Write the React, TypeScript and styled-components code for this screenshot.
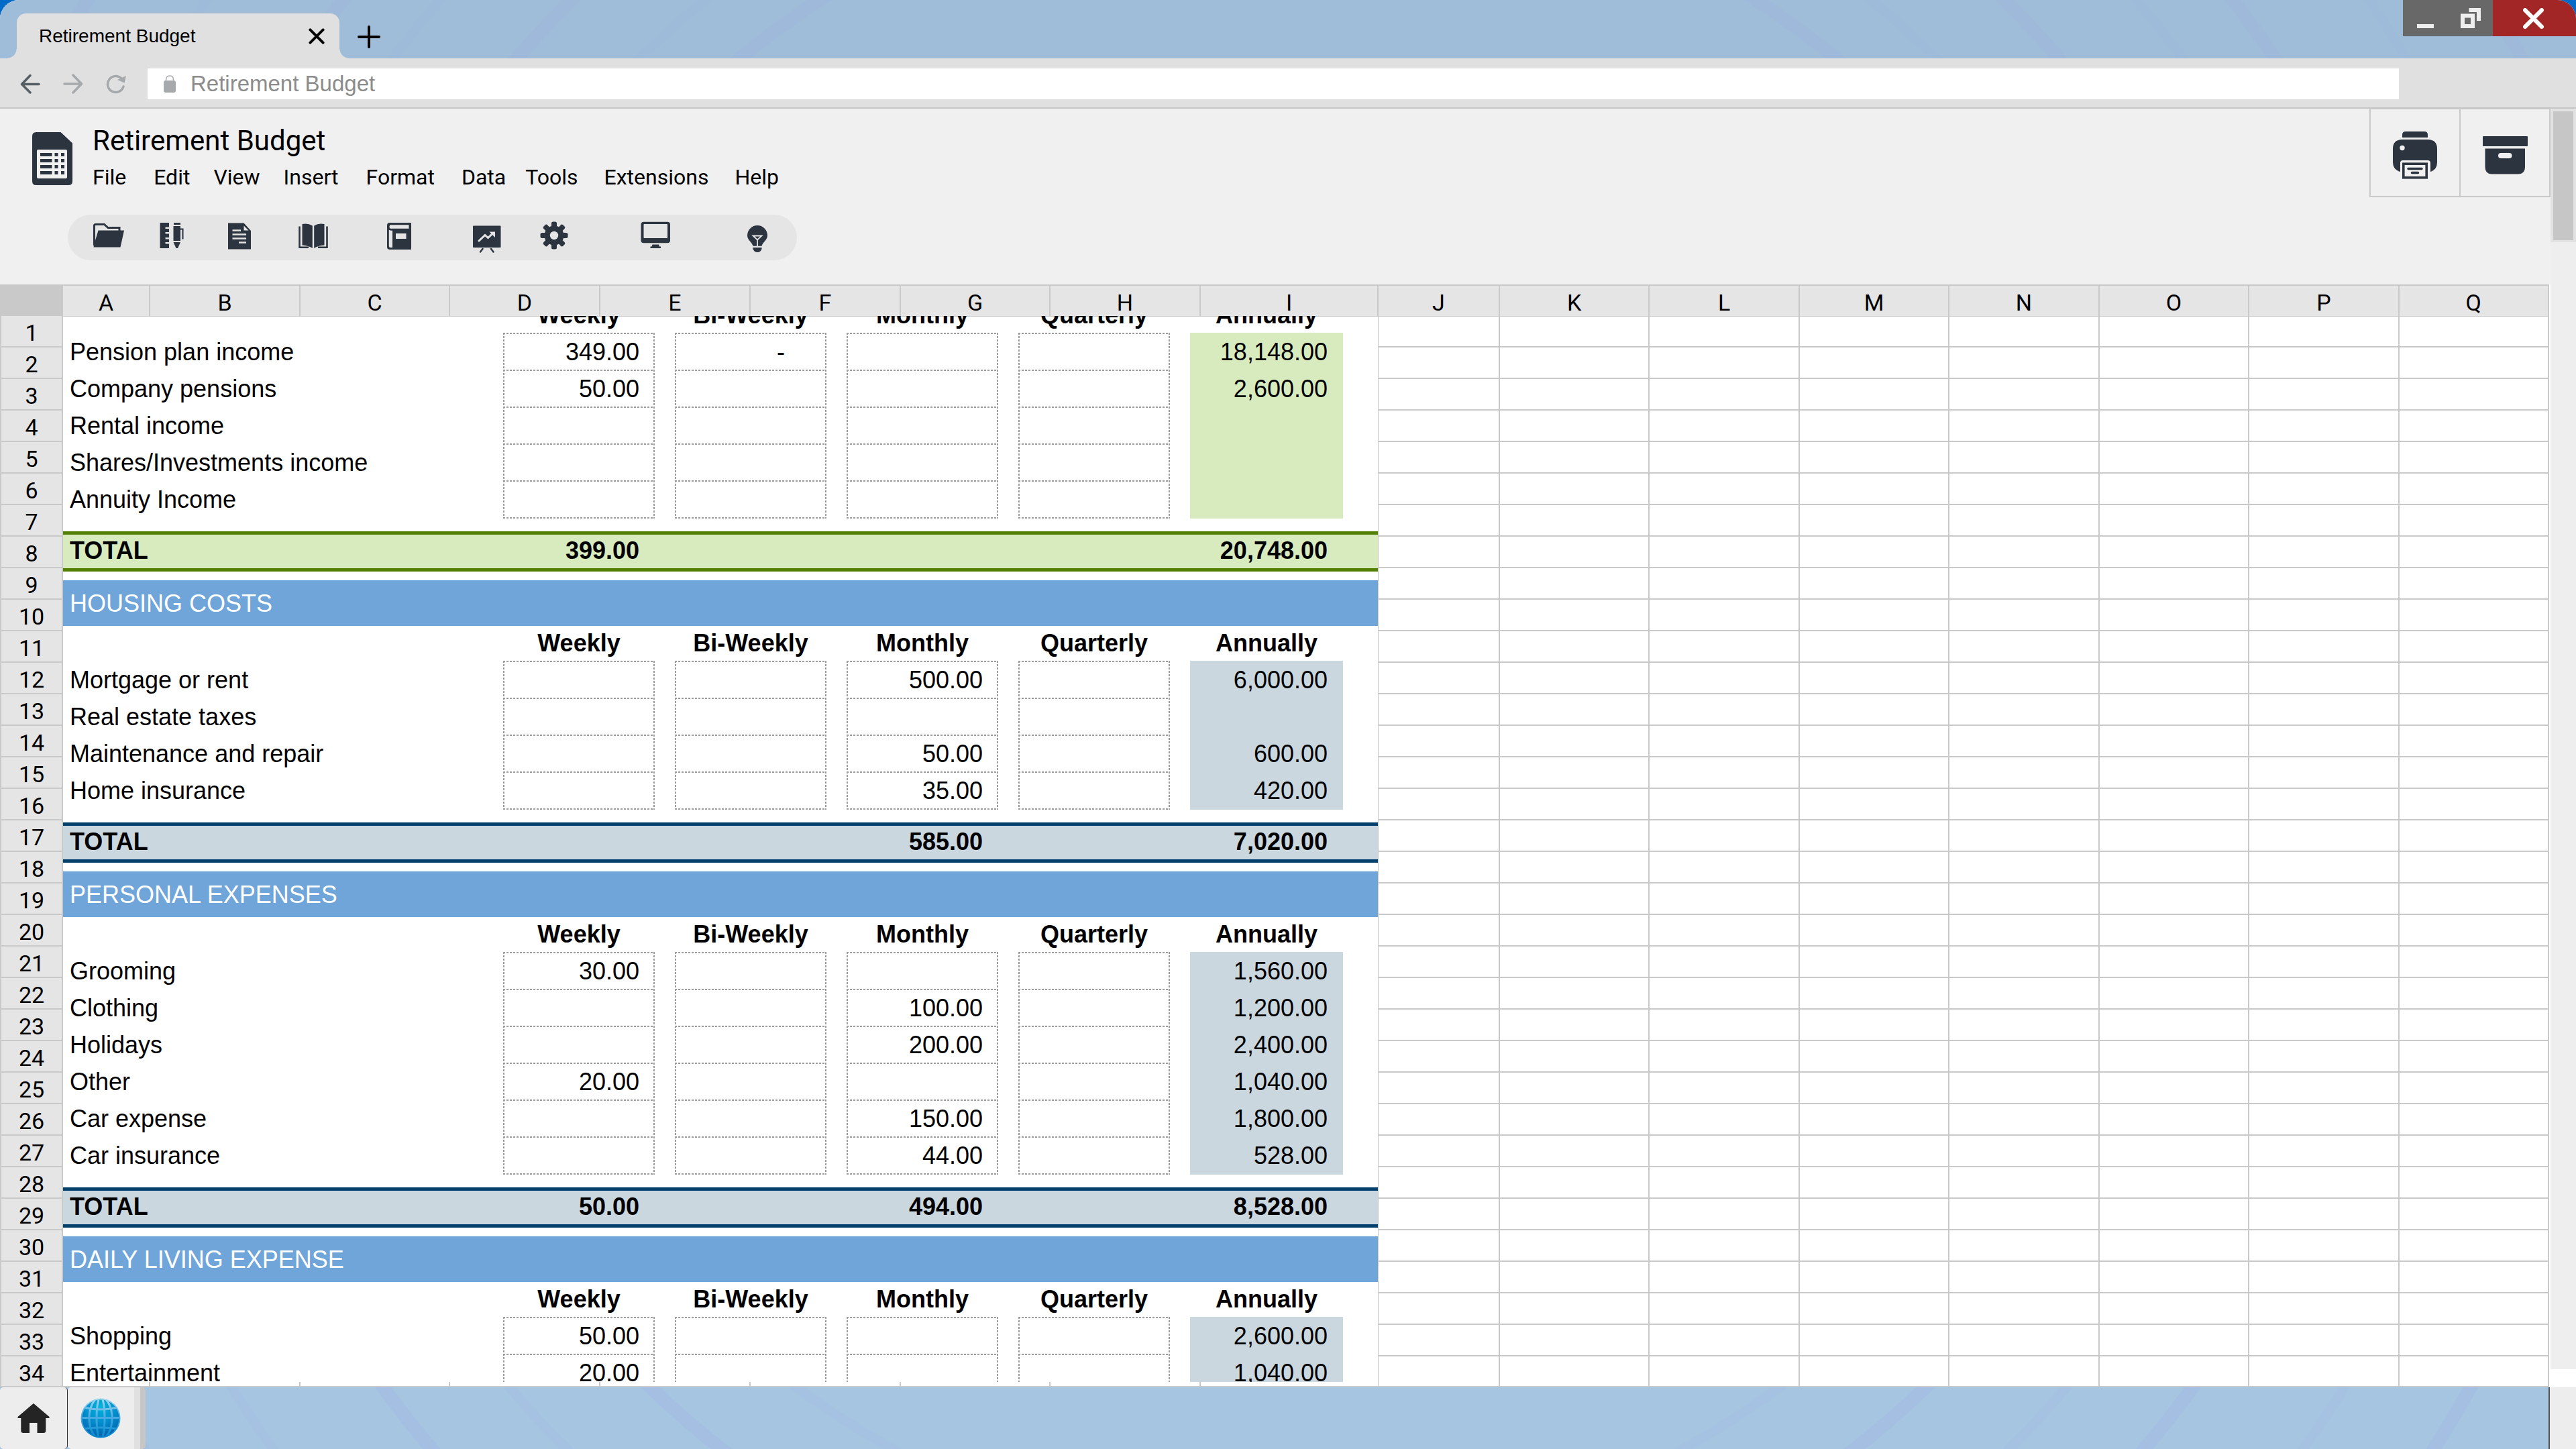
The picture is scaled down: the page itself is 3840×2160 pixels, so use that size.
import React from "react";
import styled, { createGlobalStyle } from "styled-components";

const ink = "#2c353f";
const line = "#c9c9c9";
const uiFont = `Roboto, "Liberation Sans", sans-serif`;
const textFont = `"Liberation Sans", Arial, sans-serif`;

const sheetColumns = "94px 130px 224px 223px 224px 224px 224px 223px 224px 265px 181px repeat(7, minmax(0, 1fr))";

const GlobalStyle = createGlobalStyle`
  * { box-sizing: border-box; }
  html, body { margin: 0; padding: 0; background: #006ac8; }
  body { font-family: ${textFont}; color: #000; }
  button { border: 0; padding: 0; margin: 0; background: none; color: inherit; font: inherit; cursor: pointer; }
  svg { display: block; flex: none; }
`;

const Window = styled.div`
  display: flex;
  flex-direction: column;
  height: 100vh;
  overflow: hidden;
  border-radius: 28px 28px 0 0;
  background: #fff;
`;

/* ---------- title bar ---------- */

const TitleBar = styled.div`
  position: relative;
  flex: none;
  display: flex;
  align-items: flex-start;
  height: 87px;
  padding-left: 25px;
  background: #9fbdd8;
`;

const Rings = styled.svg`
  position: absolute;
  inset: 0;
  width: 100%;
  height: 100%;
`;

const Tab = styled.div`
  position: relative;
  display: flex;
  align-items: center;
  justify-content: space-between;
  width: 481px;
  height: 67px;
  margin-top: 20px;
  padding: 0 22px 0 33px;
  border-radius: 14px 14px 0 0;
  background: #e0e0e0;
  font-size: 28px;

  &::before,
  &::after {
    content: "";
    position: absolute;
    bottom: 0;
    width: 14px;
    height: 14px;
  }
  &::before {
    right: 100%;
    background: radial-gradient(circle at 0 0, transparent 13px, #e0e0e0 14px);
  }
  &::after {
    left: 100%;
    background: radial-gradient(circle at 100% 0, transparent 13px, #e0e0e0 14px);
  }
`;

const NewTab = styled.button`
  position: relative;
  margin: 38px 0 0 27px;
`;

const WindowControls = styled.div`
  position: relative;
  display: flex;
  margin-left: auto;
`;

const WindowButton = styled.button<{ $close?: boolean }>`
  display: grid;
  place-items: center;
  width: ${(p) => (p.$close ? 124 : 67)}px;
  height: 54px;
  padding-right: ${(p) => (p.$close ? 4 : 0)}px;
  background: ${(p) => (p.$close ? "#a32626" : "#686868")};
`;

/* ---------- address bar ---------- */

const AddressBar = styled.div`
  flex: none;
  display: flex;
  align-items: center;
  height: 75px;
  padding: 2px 264px 0 30px;
  border-bottom: 2px solid #c6c6c6;
  background: #e0e0e0;
`;

const NavButtons = styled.div`
  display: flex;
  gap: 34px;
  width: 190px;
`;

const UrlField = styled.label`
  flex: 1;
  display: flex;
  align-items: center;
  gap: 22px;
  height: 46px;
  padding-left: 24px;
  background: #fff;
`;

const UrlInput = styled.input`
  flex: 1;
  min-width: 0;
  border: 0;
  padding: 0;
  outline: none;
  background: none;
  color: #8c8c8c;
  font: 33px/44px ${textFont};
`;

/* ---------- workspace ---------- */

const Workspace = styled.div`
  flex: 1;
  min-height: 0;
  display: flex;
`;

const Main = styled.main`
  flex: 1;
  min-width: 0;
  display: flex;
  flex-direction: column;
`;

const Header = styled.header`
  flex: none;
  display: flex;
  justify-content: space-between;
  align-items: flex-start;
  height: 262px;
  background: #f0f0f0;
`;

const Brand = styled.div`
  display: flex;
  gap: 30px;
  padding: 24px 0 0 48px;

  > svg {
    margin-top: 11px;
  }
`;

const DocTitle = styled.h1`
  margin: 0 0 10px;
  font: 400 42px/48px ${uiFont};
`;

const Menu = styled.nav`
  display: flex;
  font: 32px/40px ${uiFont};
`;

const MenuItem = styled.button<{ $gap: number }>`
  margin-left: ${(p) => p.$gap}px;
`;

const Toolbar = styled.div`
  display: flex;
  align-items: center;
  width: 1087px;
  height: 68px;
  margin: 36px 0 0 101px;
  padding-left: 37px;
  border-radius: 34px;
  background: #e5e5e5;
`;

const Tool = styled.button<{ $gap: number }>`
  margin-left: ${(p) => p.$gap}px;
`;

const Actions = styled.div`
  display: flex;
  border: 2px solid ${line};
  border-top-width: 1px;
`;

const Action = styled.button`
  display: grid;
  place-items: center;
  width: 132px;
  height: 129px;
  padding-top: 8px;

  & + & {
    width: 134px;
    border-left: 2px solid ${line};
  }
`;

/* ---------- sheet ---------- */

const ColumnHeads = styled.div`
  flex: none;
  display: grid;
  grid-template-columns: ${sheetColumns};
  height: 47px;
  margin-right: 2px;
  border-top: 2px solid ${line};
  background: #e5e5e5;
  font: 34px/40px ${uiFont};
`;

const ColumnHead = styled.div`
  padding-top: 5px;
  border-right: 2px solid ${line};
  border-bottom: 1px solid ${line};
  text-align: center;
`;

const Corner = styled.div`
  background: #c9c9c9;
`;

const SheetBody = styled.div`
  flex: 1;
  min-height: 0;
  display: flex;
  margin-right: 2px;
  border-bottom: 2px solid ${line};
  overflow: hidden;
`;

const RowHeads = styled.div`
  flex: none;
  width: 94px;
  border-left: 2px solid ${line};
  border-right: 2px solid ${line};
  background: #e5e5e5;
  font: 34px/40px ${uiFont};
`;

const RowHead = styled.div`
  height: 47px;
  padding-top: 5px;
  border-bottom: 2px solid ${line};
  text-align: center;
`;

const BudgetPane = styled.div`
  flex: none;
  display: flex;
  flex-direction: column;
  width: 1961px;
  border-right: 1px solid ${line};
`;

const BudgetView = styled.div`
  flex: 1;
  min-height: 0;
  overflow: hidden;
  font-size: 36px;
`;

const BudgetScroll = styled.div`
  margin-top: -27px;
`;

const Ticks = styled.div`
  flex: none;
  display: grid;
  grid-template-columns: 130px 224px 223px 224px 224px 224px 223px 224px;
  height: 6px;

  > i {
    border-right: 2px solid ${line};
  }
`;

const Band = styled.h2`
  height: 68px;
  margin: 13px 0 0;
  padding-left: 10px;
  background: #70a5da;
  color: #fff;
  font-size: 36px;
  font-weight: 400;
  line-height: 70px;
`;

const BudgetTable = styled.table`
  width: 100%;
  table-layout: fixed;
  border-collapse: separate;
  border-spacing: 0;

  th,
  td {
    padding: 0;
    vertical-align: top;
  }
`;

const PeriodHead = styled.th<{ $inset: number }>`
  height: 52px;
  line-height: 52px;

  && {
    padding-right: ${(p) => p.$inset}px;
  }
`;

const LabelCell = styled.th`
  height: 55px;
  border-top: 2px solid transparent;
  font-weight: 400;
  line-height: 53px;
  text-align: left;

  && {
    padding-left: 10px;
  }
`;

const EntryCell = styled.td<{ $inset: number }>`
  && {
    padding-right: ${(p) => p.$inset}px;
  }
`;

const dotsAcross = "repeating-linear-gradient(90deg, #9c9c9c 0 3px, transparent 3px 5px)";
const dotsDown = "repeating-linear-gradient(180deg, #9c9c9c 0 3px, transparent 3px 5px)";

const Entry = styled.div<{ $last: boolean; $dash: boolean }>`
  height: ${(p) => (p.$last ? 57 : 55)}px;
  padding: 2px ${(p) => (p.$dash ? 62 : 23)}px 0 0;
  background-image: ${dotsAcross}, ${dotsDown}, ${dotsDown}, ${dotsAcross};
  background-position: left top, left top, right top, left bottom;
  background-size: 100% 2px, 2px 100%, 2px 100%, 100% ${(p) => (p.$last ? 2 : 0)}px;
  background-repeat: no-repeat;
  line-height: 53px;
  text-align: right;
`;

const Annual = styled.div<{ $last: boolean; $fill: string }>`
  height: ${(p) => (p.$last ? 57 : 55)}px;
  padding-right: 23px;
  border-top: 2px solid ${(p) => p.$fill};
  background: ${(p) => p.$fill};
  line-height: 53px;
  text-align: right;
`;

const SpacerCell = styled.td`
  height: 19px;
`;

const TotalCell = styled.td<{ $fill: string; $edge: string; $inset: number }>`
  height: 60px;
  border-top: 5px solid ${(p) => p.$edge};
  border-bottom: 5px solid ${(p) => p.$edge};
  background: ${(p) => p.$fill};
  font-weight: 700;
  line-height: 48px;
  text-align: ${(p) => (p.$inset ? "right" : "left")};

  && {
    padding-left: ${(p) => (p.$inset ? 0 : 10)}px;
    padding-right: ${(p) => p.$inset}px;
  }
`;

const BlankGrid = styled.table`
  flex: 1;
  width: 0;
  table-layout: fixed;
  border-collapse: separate;
  border-spacing: 0;
  align-self: flex-start;

  td {
    height: 47px;
    padding: 0;
    border-right: 2px solid ${line};
    border-bottom: 2px solid ${line};
  }
`;

const ScrollRail = styled.div`
  flex: none;
  width: 38px;
  border-bottom: 27px solid #fff;
  background: #eeeeee;
`;

const ScrollHousing = styled.div`
  height: 199px;
  padding: 4px 4px 3px;
  background: #e2e2e2;
`;

const ScrollThumb = styled.div`
  height: 192px;
  background: #c6c6c6;
`;

/* ---------- taskbar ---------- */

const Taskbar = styled.footer`
  flex: none;
  position: relative;
  display: flex;
  height: 92px;
  background: #a5c5e1;
`;

const TaskButton = styled.button<{ $active?: boolean }>`
  position: relative;
  display: grid;
  place-items: center;
  width: ${(p) => (p.$active ? 116 : 101)}px;
  padding-right: ${(p) => (p.$active ? 10 : 0)}px;
  border-right: ${(p) => (p.$active ? "8px solid #c6c6c6" : "1px solid #333")};
  border-radius: 5px;
  background: #ededed;
  box-shadow: ${(p) => (p.$active ? "inset -9px 0 0 #e0e0e0" : "none")};
`;

const TaskEnd = styled.div`
  position: relative;
  width: 41px;
  margin-left: auto;
  border-left: 2px solid #555;
  background: #ededed;
`;

/* ---------- icons ---------- */

const ringsTop = [2090, 1940, 1775, 1663, 1519, 1386, 1286];
const ringsBottom = [2021, 1859, 1672, 1524, 1371, 1230];

function RingPattern({ top }: { top?: boolean }) {
  const radii = top ? ringsTop : ringsBottom;
  return (
    <Rings
      viewBox={top ? "0 0 3840 87" : "0 2068 3840 92"}
      preserveAspectRatio="xMidYMid slice"
      aria-hidden="true"
    >
      {radii.map((r, i) => (
        <circle
          key={r}
          cx="1920"
          cy="1080"
          r={r}
          fill="none"
          stroke={top ? "#9fb9da" : "#a5bfe3"}
          strokeWidth={i % 2 ? 14 : 20}
          opacity={i % 2 ? 0.6 : 1}
        />
      ))}
    </Rings>
  );
}

const CloseIcon = ({ size, color, weight }: { size: number; color: string; weight: number }) => (
  <svg width={size} height={size} viewBox="0 0 30 30" stroke={color} strokeWidth={weight} strokeLinecap="round">
    <path d="M3 3L27 27M27 3L3 27" />
  </svg>
);

const LogoIcon = () => (
  <svg width="60" height="79" viewBox="0 0 60 79">
    <path fill={ink} d="M6 0H42.500L60 16.500V73Q60 79 54 79H6Q0 79 0 73V6Q0 0 6 0Z" />
    <rect x="7" y="26" width="45" height="43" rx="2" fill="#f0f0f0" />
    {[31, 40, 49, 58].map((y) => (
      <path key={y} fill={ink} d={`M12 ${y}h17.500v5h-17.500zM33.500 ${y}h5v5h-5zM43 ${y}h5v5h-5z`} />
    ))}
  </svg>
);

const paper = "#e5e5e5";

const toolIcons: { name: string; gap: number; art: React.ReactNode }[] = [
  {
    name: "Open folder",
    gap: 0,
    art: (
      <>
        <path d="M2.500 36V6.500Q2.500 4.500 4.500 4.500H17.500L23 9.500H40V14" fill="none" stroke={ink} strokeWidth="3" />
        <path d="M8.500 13.500H47L41.500 38.500H1.500L3.500 30Z" />
      </>
    ),
  },
  {
    name: "Ruler and pen",
    gap: 46,
    art: (
      <>
        <path d="M6.500 2H20V8.500H14.500V11H20V16H14.500V18.500H20V24H14.500V26.500H20V31H14.500V33.500H20V40H6.500Z" />
        <path d="M27 2H37V5H27ZM26.500 7H37V29H26.500ZM26.500 31H37L33 40H30.500Z" />
        <path d="M37 11.500H40.500V26.500" fill="none" stroke={ink} strokeWidth="2" />
      </>
    ),
  },
  {
    name: "Document",
    gap: 53,
    art: (
      <>
        <path d="M7 2.500H30.500L41 14V41.500H7Z" />
        <path d="M30.500 6.500V13.500H37.500Z" fill={paper} />
        <path d="M13.500 13.500H26M13.500 19.500H34M13.500 25.500H34M23 31.500H34" stroke={paper} strokeWidth="2.500" />
      </>
    ),
  },
  {
    name: "Open book",
    gap: 62,
    art: (
      <>
        <path d="M7.500 4Q16 2 22.800 6.500V40Q17 36 7.500 35.500ZM40.500 4Q32 2 25.200 6.500V40Q31 36 40.500 35.500Z" />
        <path d="M3.500 7.500V38.700H17M44.500 7.500V38.700H31" fill="none" stroke={ink} strokeWidth="2.600" />
      </>
    ),
  },
  {
    name: "Notebook",
    gap: 80,
    art: (
      <>
        <path d="M10 2H42V42H10Q6 42 6 38V6Q6 2 10 2Z" />
        <path d="M10.500 5.200H38.500V10.800H10.500Q8.500 8 10.500 5.200ZM8.800 12.800Q10 13.800 14 13.800V39H11Q8.800 39 8.800 37ZM19 18H34.500V26H19Z" fill={paper} />
      </>
    ),
  },
  {
    name: "Chart",
    gap: 83,
    art: (
      <>
        <rect x="3" y="6.500" width="41.500" height="32.500" rx="1" />
        <path d="M12 29L21 20.500L25.500 24.500L33 17.500" fill="none" stroke={paper} strokeWidth="3" strokeLinecap="round" />
        <path d="M27.500 15.500H36V24Z" fill={paper} />
        <path d="M17.500 41L14 45.500M30 41L33.500 45.500" stroke={ink} strokeWidth="2.500" strokeLinecap="round" />
      </>
    ),
  },
  {
    name: "Settings",
    gap: 52,
    art: (
      <>
        <circle cx="24" cy="21" r="14.500" />
        {[0, 45, 90, 135, 180, 225, 270, 315].map((a) => (
          <rect key={a} x="20" y="0.500" width="8" height="12" rx="2.500" transform={`rotate(${a} 24 21)`} />
        ))}
        <circle cx="24" cy="21" r="6.200" fill={paper} />
      </>
    ),
  },
  {
    name: "Monitor",
    gap: 103,
    art: (
      <>
        <rect x="2.500" y="0.700" width="43.500" height="31.500" rx="4" />
        <rect x="6.500" y="4" width="35.500" height="21" rx="1" fill={paper} />
        <path d="M19.500 34.500H29L30 37.500H32V40H16.500V37.500H18.500Z" />
      </>
    ),
  },
  {
    name: "Ideas",
    gap: 104,
    art: (
      <>
        <path d="M24 6A15 15 0 0 1 39 21C39 28 32 31 30.500 36.700H17.500C16 31 9 28 9 21A15 15 0 0 1 24 6Z" />
        <path d="M17.500 39H30.500V41Q29 46 24 46Q19 46 17.500 41Z" />
        <path d="M17.500 21.500H30.500L24 27.500ZM24 27V37" fill="none" stroke={paper} strokeWidth="1.800" />
      </>
    ),
  },
];

const PrinterIcon = () => (
  <svg width="66" height="71" viewBox="0 0 66 71" fill={ink}>
    <path d="M14 9V5Q14 0 19 0H47Q52 0 52 5V9Z" />
    <path d="M14 12H52Q66 12 66 26V46Q66 57 56 60V47Q56 43 52 43H15Q11 43 11 47V60Q0 57 0 46V26Q0 12 14 12Z" />
    <circle cx="14" cy="24.500" r="3.700" fill="#f0f0f0" />
    <rect x="15.800" y="48.200" width="34.400" height="20.600" fill="#f0f0f0" stroke={ink} strokeWidth="3.600" />
    <path d="M23 55.500H43M28.500 61.500H37.500" stroke={ink} strokeWidth="3.600" strokeLinecap="round" />
  </svg>
);

const ArchiveIcon = () => (
  <svg width="67" height="57" viewBox="0 0 67 57" fill={ink}>
    <rect width="67" height="15" rx="1" />
    <path d="M3.500 18.500H63V46Q63 56.500 52 56.500H14.500Q3.500 56.500 3.500 46Z" />
    <rect x="23" y="25" width="20.500" height="8" rx="4" fill="#f0f0f0" />
  </svg>
);

const HomeIcon = () => (
  <svg width="48" height="45" viewBox="0 0 48 45" fill="#242424">
    <path d="M24 0L47.500 20V22H42.300V40.500Q42.300 44 39 44H29.500V29H18V44H8.500Q5.300 44 5.300 40.500V22H0.500V20Z" />
  </svg>
);

const GlobeIcon = () => (
  <svg width="60" height="60" viewBox="0 0 60 60">
    <defs>
      <linearGradient id="globeRim" gradientUnits="userSpaceOnUse" x1="0" y1="0" x2="0" y2="60">
        <stop offset="0" stopColor="#a5d8ee" />
        <stop offset="0.500" stopColor="#45a9e0" />
        <stop offset="1" stopColor="#0086cc" />
      </linearGradient>
      <radialGradient id="globeSea" cx="0.500" cy="0.200" r="0.800">
        <stop offset="0" stopColor="#00b4dc" />
        <stop offset="0.500" stopColor="#0090cf" />
        <stop offset="1" stopColor="#0062ad" />
      </radialGradient>
      <clipPath id="globeInner">
        <circle cx="30" cy="30" r="27.500" />
      </clipPath>
    </defs>
    <circle cx="30" cy="30" r="29.500" fill="url(#globeRim)" />
    <circle cx="30" cy="30" r="27.500" fill="url(#globeSea)" />
    <g clipPath="url(#globeInner)" fill="none" stroke="url(#globeRim)" strokeWidth="3">
      <ellipse cx="30" cy="30" rx="6" ry="32" />
      <ellipse cx="30" cy="30" rx="17" ry="31" />
      <path d="M4 14Q30 20 56 14M1 29.500H59M4 46Q30 42 56 46" />
    </g>
  </svg>
);

/* ---------- data ---------- */

type Line = [label: string, weekly: string, biWeekly: string, monthly: string, quarterly: string, annually: string];

interface SectionData {
  title?: string;
  rows: Line[];
  total?: Line;
  fill: string;
  edge: string;
}

const periods = ["Weekly", "Bi-Weekly", "Monthly", "Quarterly", "Annually"];
const green = { fill: "#d8ebbf", edge: "#538000" };
const blue = { fill: "#cbd7df", edge: "#003f6b" };

const sections: SectionData[] = [
  {
    ...green,
    rows: [
      ["Pension plan income", "349.00", "-", "", "", "18,148.00"],
      ["Company pensions", "50.00", "", "", "", "2,600.00"],
      ["Rental income", "", "", "", "", ""],
      ["Shares/Investments income", "", "", "", "", ""],
      ["Annuity Income", "", "", "", "", ""],
    ],
    total: ["TOTAL", "399.00", "", "", "", "20,748.00"],
  },
  {
    ...blue,
    title: "HOUSING COSTS",
    rows: [
      ["Mortgage or rent", "", "", "500.00", "", "6,000.00"],
      ["Real estate taxes", "", "", "", "", ""],
      ["Maintenance and repair", "", "", "50.00", "", "600.00"],
      ["Home insurance", "", "", "35.00", "", "420.00"],
    ],
    total: ["TOTAL", "", "", "585.00", "", "7,020.00"],
  },
  {
    ...blue,
    title: "PERSONAL EXPENSES",
    rows: [
      ["Grooming", "30.00", "", "", "", "1,560.00"],
      ["Clothing", "", "", "100.00", "", "1,200.00"],
      ["Holidays", "", "", "200.00", "", "2,400.00"],
      ["Other", "20.00", "", "", "", "1,040.00"],
      ["Car expense", "", "", "150.00", "", "1,800.00"],
      ["Car insurance", "", "", "44.00", "", "528.00"],
    ],
    total: ["TOTAL", "50.00", "", "494.00", "", "8,528.00"],
  },
  {
    ...blue,
    title: "DAILY LIVING EXPENSE",
    rows: [
      ["Shopping", "50.00", "", "", "", "2,600.00"],
      ["Entertainment", "20.00", "", "", "", "1,040.00"],
    ],
  },
];

const menuItems: [string, number][] = [
  ["File", 0],
  ["Edit", 41],
  ["View", 35],
  ["Insert", 35],
  ["Format", 41],
  ["Data", 40],
  ["Tools", 29],
  ["Extensions", 39],
  ["Help", 39],
];

function Section({ title, rows, total, fill, edge }: SectionData) {
  const inset = (i: number) => (i === 4 ? 52 : 30);
  return (
    <section>
      {title && <Band>{title}</Band>}
      <BudgetTable>
        <colgroup>
          <col style={{ width: 656 }} />
          {[0, 1, 2, 3].map((i) => (
            <col key={i} style={{ width: 256 }} />
          ))}
          <col />
        </colgroup>
        <thead>
          <tr>
            <td />
            {periods.map((p, i) => (
              <PeriodHead key={p} scope="col" $inset={inset(i)}>
                {p}
              </PeriodHead>
            ))}
          </tr>
        </thead>
        <tbody>
          {rows.map(([label, ...values], r) => {
            const last = Boolean(total) && r === rows.length - 1;
            return (
              <tr key={label}>
                <LabelCell scope="row">{label}</LabelCell>
                {values.map((v, i) => (
                  <EntryCell key={i} $inset={inset(i)}>
                    {i === 4 ? (
                      <Annual $last={last} $fill={fill}>
                        {v}
                      </Annual>
                    ) : (
                      <Entry $last={last} $dash={v === "-"}>
                        {v}
                      </Entry>
                    )}
                  </EntryCell>
                ))}
              </tr>
            );
          })}
        </tbody>
        {total && (
          <tfoot>
            <tr>
              <SpacerCell colSpan={6} />
            </tr>
            <tr>
              {total.map((v, i) => (
                <TotalCell key={i} $fill={fill} $edge={edge} $inset={i === 0 ? 0 : i === 5 ? 75 : 53}>
                  {v}
                </TotalCell>
              ))}
            </tr>
          </tfoot>
        )}
      </BudgetTable>
    </section>
  );
}

const rowNumbers = Array.from({ length: 34 }, (_, i) => i + 1);

export default function App() {
  return (
    <>
      <GlobalStyle />
      <Window>
        <TitleBar>
          <RingPattern top />
          <Tab>
            <span>Retirement Budget</span>
            <button aria-label="Close tab">
              <CloseIcon size={24} color="#000" weight={5} />
            </button>
          </Tab>
          <NewTab aria-label="New tab">
            <svg width="34" height="34" viewBox="0 0 34 34" stroke="#000" strokeWidth="4" strokeLinecap="round">
              <path d="M17 2V32M2 17H32" />
            </svg>
          </NewTab>
          <WindowControls>
            <WindowButton aria-label="Minimize">
              <svg width="25" height="32" viewBox="0 0 25 32">
                <rect y="25" width="25" height="6" fill="#eee" />
              </svg>
            </WindowButton>
            <WindowButton aria-label="Restore">
              <svg width="30" height="30" viewBox="0 0 30 30" fill="#eee">
                <path d="M12.500 0H30V19H24V6H12.500Z" />
                <path fillRule="evenodd" d="M0 8.500H21V30H0ZM6 14.500V24H15V14.500Z" />
              </svg>
            </WindowButton>
            <WindowButton $close aria-label="Close window">
              <CloseIcon size={31} color="#fff" weight={6} />
            </WindowButton>
          </WindowControls>
        </TitleBar>

        <AddressBar>
          <NavButtons>
            <button aria-label="Back">
              <svg width="30" height="30" viewBox="0 0 30 30" fill="none" stroke="#565e66" strokeWidth="3.500" strokeLinecap="round" strokeLinejoin="round">
                <path d="M15 2.500L2.500 15.500L15 28M3 15.500H28" />
              </svg>
            </button>
            <button aria-label="Forward">
              <svg width="30" height="30" viewBox="0 0 30 30" fill="none" stroke="#a6a9ac" strokeWidth="3.500" strokeLinecap="round" strokeLinejoin="round">
                <path d="M15 2L27.500 15L15 28M2 15H27" />
              </svg>
            </button>
            <button aria-label="Reload">
              <svg width="31" height="30" viewBox="0 0 31 30">
                <path d="M23.500 7.500A12 12 0 1 0 26 19" fill="none" stroke="#a6a9ac" strokeWidth="3.500" strokeLinecap="round" />
                <path d="M30 3L27.500 13.500L17 9Z" fill="#a6a9ac" />
              </svg>
            </button>
          </NavButtons>
          <UrlField>
            <svg width="18" height="26" viewBox="0 0 18 26" fill="#a6aaad">
              <rect y="8" width="18" height="18" rx="3" />
              <path d="M3.500 9V7Q3.500 1 9 1Q14.500 1 14.500 7V9" fill="none" stroke="#a6aaad" strokeWidth="1.500" />
            </svg>
            <UrlInput aria-label="Address" defaultValue="Retirement Budget" />
          </UrlField>
        </AddressBar>

        <Workspace>
          <Main>
            <Header>
              <div>
                <Brand>
                  <LogoIcon />
                  <div>
                    <DocTitle>Retirement Budget</DocTitle>
                    <Menu>
                      {menuItems.map(([label, gap]) => (
                        <MenuItem key={label} $gap={gap}>
                          {label}
                        </MenuItem>
                      ))}
                    </Menu>
                  </div>
                </Brand>
                <Toolbar>
                  {toolIcons.map((t) => (
                    <Tool key={t.name} $gap={t.gap} aria-label={t.name}>
                      <svg width="48" height="48" viewBox="0 0 48 48" fill={ink}>
                        {t.art}
                      </svg>
                    </Tool>
                  ))}
                </Toolbar>
              </div>
              <Actions>
                <Action aria-label="Print">
                  <PrinterIcon />
                </Action>
                <Action aria-label="Archive">
                  <ArchiveIcon />
                </Action>
              </Actions>
            </Header>

            <ColumnHeads>
              <Corner />
              {"ABCDEFGHIJKLMNOPQ".split("").map((c) => (
                <ColumnHead key={c}>{c}</ColumnHead>
              ))}
            </ColumnHeads>

            <SheetBody>
              <RowHeads>
                {rowNumbers.map((n) => (
                  <RowHead key={n}>{n}</RowHead>
                ))}
              </RowHeads>
              <BudgetPane>
                <BudgetView>
                  <BudgetScroll>
                    {sections.map((s, i) => (
                      <Section key={i} {...s} />
                    ))}
                  </BudgetScroll>
                </BudgetView>
                <Ticks>
                  {rowNumbers.slice(0, 8).map((n) => (
                    <i key={n} />
                  ))}
                </Ticks>
              </BudgetPane>
              <BlankGrid aria-label="Empty cells">
                <colgroup>
                  <col style={{ width: 181 }} />
                  {rowNumbers.slice(0, 7).map((n) => (
                    <col key={n} />
                  ))}
                </colgroup>
                <tbody>
                  {rowNumbers.map((n) => (
                    <tr key={n}>
                      {rowNumbers.slice(0, 8).map((c) => (
                        <td key={c} />
                      ))}
                    </tr>
                  ))}
                </tbody>
              </BlankGrid>
            </SheetBody>
          </Main>
          <ScrollRail>
            <ScrollHousing>
              <ScrollThumb />
            </ScrollHousing>
          </ScrollRail>
        </Workspace>

        <Taskbar>
          <RingPattern />
          <TaskButton aria-label="Home">
            <HomeIcon />
          </TaskButton>
          <TaskButton $active aria-label="Browser">
            <GlobeIcon />
          </TaskButton>
          <TaskEnd />
        </Taskbar>
      </Window>
    </>
  );
}
